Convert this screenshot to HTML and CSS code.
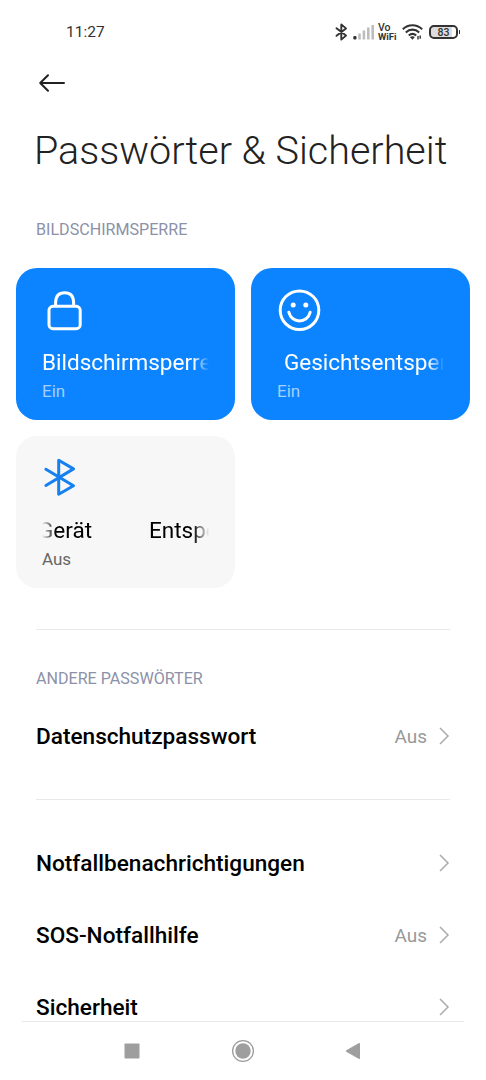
FILE: index.html
```html
<!DOCTYPE html>
<html lang="de">
  <head>
    <meta charset="UTF-8" />
    <title>Passwörter &amp; Sicherheit</title>
    <link rel="stylesheet" href="styles.css">
  </head>
  <body>
    <div class="status-bar">
      <div class="clock">11:27</div>
      <div class="status-icons">
        <svg class="status-bluetooth" width="13" height="18" viewBox="0 0 13 18" fill="none" stroke="#333" stroke-width="1.9" stroke-linejoin="round" stroke-linecap="round">
          <path d="M1.5 5.2L11 12.6L6.3 16.6V1.4L11 5.4L1.5 12.8"/>
        </svg>
        <svg class="status-signal" width="22" height="16" viewBox="0 0 22 16">
          <rect x="0.3" y="12" width="3.2" height="3.4" rx="1" fill="#333"/>
          <g fill="#bdbdbd">
            <rect x="5.2" y="9.5" width="2.6" height="6"/>
            <rect x="9.6" y="6.5" width="2.6" height="9"/>
            <rect x="14" y="3.5" width="2.6" height="12"/>
            <rect x="18.4" y="1" width="2.6" height="14.5"/>
          </g>
        </svg>
        <div class="vowifi"><span class="vo">Vo</span><span>WiFi</span></div>
        <svg class="status-wifi" width="21" height="16" viewBox="0 0 21 16" fill="none" stroke="#333" stroke-width="2.1">
          <path d="M0.8 5.2C6.2 -0.1 14.6 -0.1 20.2 5.2"/>
          <path d="M3.8 8.4C7.8 4.7 13.2 4.7 17.2 8.4"/>
          <path d="M6.8 11.5C9 9.5 12 9.5 14.2 11.5"/>
          <path d="M7.9 12.9L10.5 15.7L12.9 12.9Q10.5 11.4 7.9 12.9Z" fill="#333" stroke="none"/>
          <path d="M16 12V15.4M18.2 11.4V14.8" stroke-width="1.4"/>
        </svg>
        <div class="battery"><span>83</span></div>
      </div>
    </div>

    <div class="app-bar">
      <svg width="28" height="20" viewBox="0 0 28 20" fill="none" stroke="#222" stroke-width="2" stroke-linecap="round" stroke-linejoin="round">
        <path d="M26 10H2.2M10 2.2L2.2 10L10 17.8"/>
      </svg>
    </div>

    <main class="content">
      <h1 class="page-title">Passwörter &amp; Sicherheit</h1>

      <h2 class="section-label">BILDSCHIRMSPERRE</h2>
      <div class="cards">
        <div class="card active">
          <svg class="card-icon" width="44" height="42" viewBox="0 0 44 42" fill="none" stroke="#fff" stroke-width="3">
            <rect x="7" y="17.3" width="31.2" height="22.4" rx="4"/>
            <path d="M13.6 17V13.5Q13.9 3.8 22.6 3.8Q31.4 3.8 31.6 13.5V17"/>
          </svg>
          <div class="card-title"><span>Bildschirmsperre</span></div>
          <div class="card-state">Ein</div>
        </div>

        <div class="card active">
          <svg class="card-icon" width="44" height="42" viewBox="0 0 44 42" fill="none" stroke="#fff" stroke-width="3" stroke-linecap="round">
            <circle cx="22.5" cy="21.2" r="19.3"/>
            <circle cx="16.2" cy="16" r="2.5" fill="#fff" stroke="none"/>
            <circle cx="28.8" cy="16" r="2.5" fill="#fff" stroke="none"/>
            <path d="M11.8 23.2C14.6 34.8 30.4 34.8 33.2 23.2"/>
          </svg>
          <div class="card-title scroll-start"><span>Gesichtsentsperrung</span></div>
          <div class="card-state">Ein</div>
        </div>

        <div class="card">
          <svg class="card-icon" width="44" height="42" viewBox="0 0 44 42" fill="none" stroke="#1580f0" stroke-width="3" stroke-linejoin="round" stroke-linecap="round">
            <path d="M3.9 12.3L31.5 28.7L16.7 37.2V3.2L31.5 11.9L3.9 28.5"/>
          </svg>
          <div class="card-title scroll-mid"><span>Gerät</span><span>Entsperren</span></div>
          <div class="card-state">Aus</div>
        </div>
      </div>

      <hr class="divider first">

      <h2 class="section-label">ANDERE PASSWÖRTER</h2>
      <div class="row">
        <span class="row-title">Datenschutzpasswort</span>
        <span class="row-value">Aus</span>
        <svg class="chevron" viewBox="0 0 12 18"><path d="M2 1L10 9L2 17"/></svg>
      </div>

      <hr class="divider second">

      <div class="row">
        <span class="row-title">Notfallbenachrichtigungen</span>
        <svg class="chevron" viewBox="0 0 12 18"><path d="M2 1L10 9L2 17"/></svg>
      </div>
      <div class="row">
        <span class="row-title">SOS-Notfallhilfe</span>
        <span class="row-value">Aus</span>
        <svg class="chevron" viewBox="0 0 12 18"><path d="M2 1L10 9L2 17"/></svg>
      </div>
      <div class="row">
        <span class="row-title">Sicherheit</span>
        <svg class="chevron" viewBox="0 0 12 18"><path d="M2 1L10 9L2 17"/></svg>
      </div>
    </main>

    <nav class="nav-bar">
      <svg width="24" height="24" viewBox="0 0 24 24" fill="#9e9e9e"><rect x="4.5" y="4.5" width="15" height="15" rx="0.8"/></svg>
      <svg width="24" height="24" viewBox="0 0 24 24" fill="#9e9e9e"><circle cx="12" cy="12" r="7.7"/><circle cx="12" cy="12" r="10.4" fill="none" stroke="#9e9e9e" stroke-width="1.3"/></svg>
      <svg width="24" height="24" viewBox="0 0 24 24" fill="#9e9e9e"><path d="M4.3 11.2L17 4.1Q18 3.7 18 4.8V19.2Q18 20.3 17 19.9L4.3 12.8Q3.2 12 4.3 11.2Z"/></svg>
    </nav>
  </body>
</html>
```
FILE: styles.css
```css
:root {
  --blue: #0d84ff;
  --card-gray: #f7f7f7;
  --label: #8c91a8;
  --line: #e9e9e9;
  --muted: #999;
}

* {
  margin: 0;
  padding: 0;
  box-sizing: border-box;
}

body {
  font-family: Roboto, sans-serif;
  background-color: #fff;
  color: #000;
  width: 486px;
  height: 1080px;
  overflow: hidden;
  display: flex;
  flex-direction: column;
}

/* Status bar */
.status-bar {
  height: 60px;
  padding: 3px 26px 0 66px;
  display: flex;
  align-items: center;
  justify-content: space-between;
  flex-shrink: 0;
}

.clock {
  font-size: 15.5px;
  color: #333;
}

.status-icons {
  display: flex;
  align-items: center;
}

.status-signal {
  margin-left: 5px;
}

.status-wifi {
  margin-left: 4px;
}

.vowifi {
  width: 20px;
  margin-left: 3px;
  display: flex;
  flex-direction: column;
  font-size: 9.5px;
  line-height: 9px;
  font-weight: 700;
  color: #333;
}

.vowifi .vo {
  font-size: 10.5px;
  font-weight: 500;
}

.battery {
  position: relative;
  width: 29px;
  height: 14px;
  margin-left: 6px;
  margin-right: 2px;
  border: 2px solid #333;
  border-radius: 5px;
  background: linear-gradient(to right, #ddd 83%, #fff 83%);
  font-size: 10.5px;
  line-height: 11px;
  font-weight: 500;
  text-align: center;
  color: #333;
}

.battery::after {
  content: "";
  position: absolute;
  right: -4px;
  top: 3px;
  width: 1.5px;
  height: 4px;
  background-color: #333;
}

.app-bar {
  height: 46px;
  padding-left: 38px;
  display: flex;
  align-items: center;
  flex-shrink: 0;
}

/* Settings list */
.content {
  flex: 1;
  min-height: 0;
  overflow: hidden;
}

.page-title {
  height: 88px;
  padding-left: 34px;
  font-size: 39.5px;
  line-height: 89px;
  font-weight: 300;
  color: #222;
  white-space: nowrap;
}

.section-label {
  padding: 0 36px;
  font-size: 16.1px;
  line-height: 20px;
  font-weight: 400;
  color: var(--label);
}

.page-title + .section-label {
  margin-top: 26px;
}

.cards {
  margin-top: 28px;
  padding: 0 16px;
  display: grid;
  grid-template-columns: repeat(2, minmax(0, 1fr));
  gap: 16px;
}

.card {
  height: 152px;
  padding: 21px 26px 0;
  border-radius: 21px;
  background-color: var(--card-gray);
}

.card.active {
  background-color: var(--blue);
  color: #fff;
}

.card-icon {
  display: block;
}

.card-title {
  margin-top: 17px;
  font-size: 22.5px;
  line-height: 28px;
  white-space: nowrap;
  overflow: hidden;
  mask-image: linear-gradient(to right, #000 calc(100% - 16px), transparent);
}

.card-title.scroll-start {
  padding-left: 7px;
}

.card-title.scroll-mid {
  display: flex;
  gap: 57px;
  mask-image: linear-gradient(to right, transparent, #000 14px, #000 calc(100% - 16px), transparent);
}

.scroll-mid span:first-child {
  margin-left: -4px;
}

.card-state {
  margin-top: 5px;
  font-size: 17px;
  line-height: 20px;
  color: #666;
}

.card.active .card-state {
  color: #a3d0ff;
}

.divider {
  height: 1px;
  margin: 0 36px;
  border: none;
  background-color: var(--line);
}

.divider.first {
  margin-top: 41px;
  margin-bottom: 39px;
}

.divider.second {
  margin-top: 27px;
  margin-bottom: 27px;
}

.row {
  height: 72px;
  padding: 0 36px;
  display: flex;
  align-items: center;
}

.section-label + .row {
  margin-top: 11px;
}

.row-title {
  flex: 1;
  font-size: 22.6px;
  font-weight: 500;
}

.row-value {
  font-size: 19px;
  color: var(--muted);
}

.chevron {
  width: 12px;
  height: 18px;
  margin-left: 11px;
  fill: none;
  stroke: #aaa;
  stroke-width: 1.5;
}

/* System navigation */
.nav-bar {
  height: 59px;
  margin: 0 22px;
  padding-left: 98px;
  border-top: 1px solid var(--line);
  display: flex;
  align-items: center;
  gap: 87px;
  flex-shrink: 0;
}
```
